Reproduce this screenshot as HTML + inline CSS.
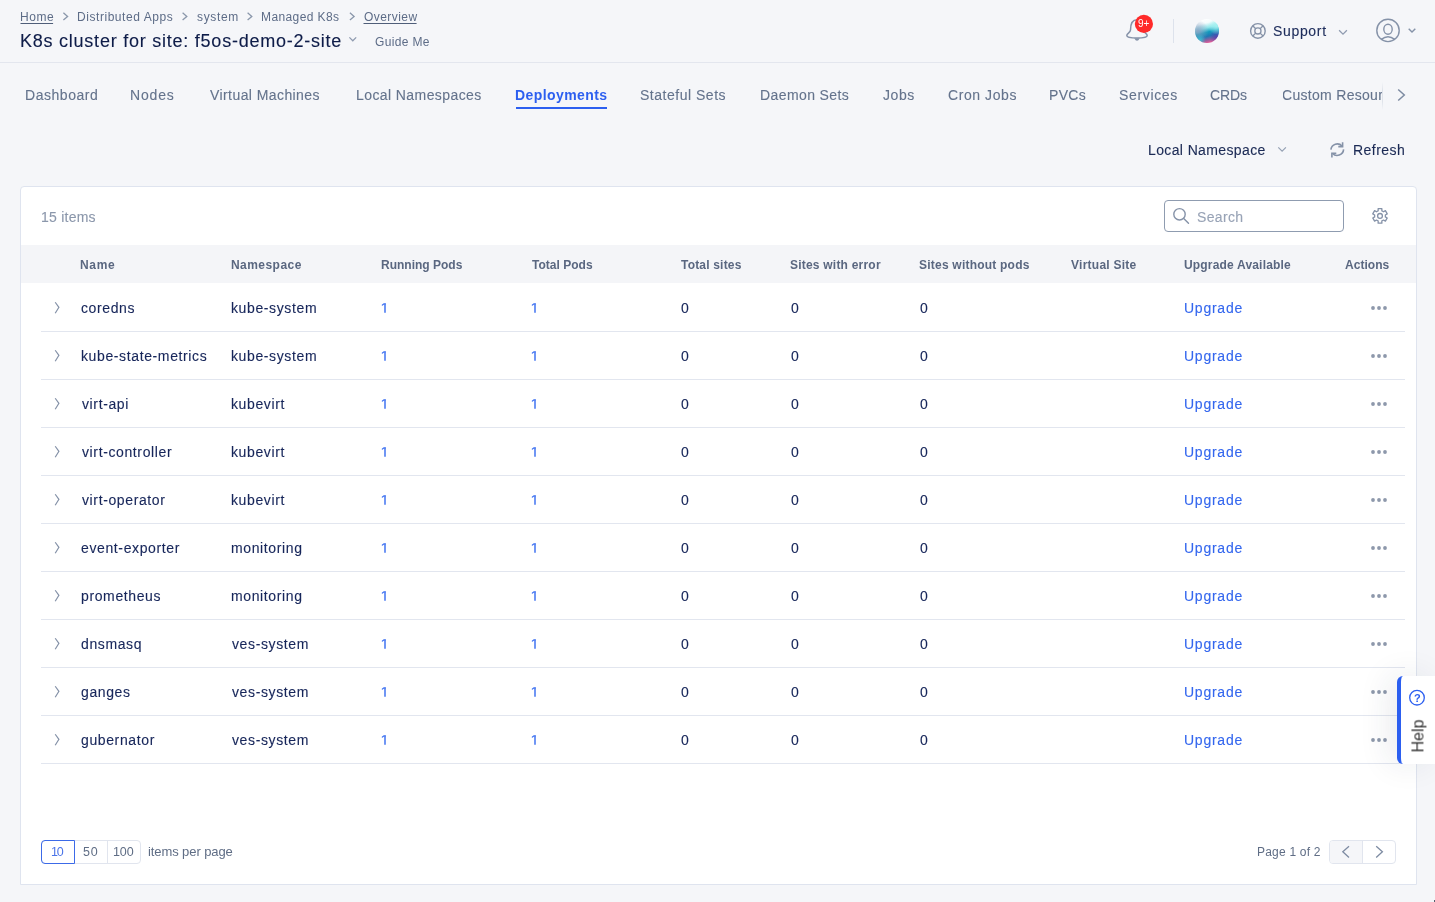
<!DOCTYPE html>
<html><head><meta charset="utf-8"><title>Deployments</title>
<style>
html,body{margin:0;padding:0;}
body{width:1435px;height:902px;overflow:hidden;background:#f5f6f9;position:relative;font-family:"Liberation Sans",sans-serif;}
.t{position:absolute;white-space:pre;will-change:transform;}
.a{position:absolute;}
svg{position:absolute;overflow:visible;}
</style></head><body>
<div class="a" style="left:0;top:62px;width:1435px;height:1px;background:#e3e6ee"></div>
<div class="a" style="left:20px;top:186px;width:1395px;height:697px;border:1px solid #dfe4ef;border-radius:4px 4px 0 0;background:#fff"></div>
<div class="a" style="left:1164px;top:200px;width:178px;height:30px;border:1px solid #8f9cb0;border-radius:4px;background:#fff"></div>
<div class="a" style="left:21px;top:245px;width:1395px;height:38px;background:#f4f5f8"></div>
<div class="a" style="left:41px;top:840px;width:98px;height:22px;border:1px solid #e1e5ee;border-radius:4px;background:#fff"></div>
<div class="a" style="left:107px;top:841px;width:1px;height:22px;background:#e1e5ee"></div>
<div class="a" style="left:41px;top:840px;width:32px;height:22px;border:1px solid #3c6ae8;border-radius:4px 0 0 4px"></div>
<div class="a" style="left:1329px;top:840px;width:65px;height:22px;border:1px solid #e1e5ee;border-radius:4px;background:#fff;overflow:hidden"><div style="position:absolute;left:0;top:0;width:32px;height:22px;background:#f5f6f9;border-right:1px solid #e1e5ee"></div></div>
<svg width="1435" height="902" style="left:0;top:0"><rect x="20.5" y="23" width="32.6" height="1" fill="#4f5e79"/><rect x="363.5" y="23" width="53.1" height="1" fill="#4f5e79"/><polyline points="63.4,12.8 67.6,16.4 63.4,20" fill="none" stroke="#8a97ab" stroke-width="1.3"/><polyline points="182.6,12.8 186.79999999999998,16.4 182.6,20" fill="none" stroke="#8a97ab" stroke-width="1.3"/><polyline points="247.6,12.8 251.79999999999998,16.4 247.6,20" fill="none" stroke="#8a97ab" stroke-width="1.3"/><polyline points="349.9,12.8 354.09999999999997,16.4 349.9,20" fill="none" stroke="#8a97ab" stroke-width="1.3"/><polyline points="349.4,37.4 352.8,40.8 356.2,37.4" fill="none" stroke="#8f9bb0" stroke-width="1.25"/><path d="M1130.5 30 C1130.5 23 1133 19.7 1137 19.7 C1141 19.7 1143.5 23 1143.5 30 C1143.5 32.5 1147.2 33.5 1147.2 35.5 C1147.2 37.2 1143 38 1137 38 C1131 38 1126.8 37.2 1126.8 35.5 C1126.8 33.5 1130.5 32.5 1130.5 30 Z" fill="none" stroke="#8592a8" stroke-width="1.5"/><path d="M1134.2 38.2 Q1137 43.2 1139.8 38.2 Z" fill="#8592a8"/><circle cx="1143.9" cy="23.9" r="9.1" fill="#ff2a2a"/><rect x="1173" y="19" width="1" height="24" fill="#dde2ec"/><defs>
<linearGradient id="sp2" x1="0.35" y1="0" x2="0.6" y2="1"><stop offset="0" stop-color="#ffffff"/><stop offset="0.18" stop-color="#f4fcfd"/><stop offset="0.38" stop-color="#8fe6ea"/><stop offset="0.55" stop-color="#139bbd"/><stop offset="0.72" stop-color="#1f78b4"/><stop offset="0.88" stop-color="#9a5f9e"/><stop offset="1" stop-color="#ef5f9a"/></linearGradient>
<radialGradient id="sp4" cx="0.12" cy="0.5" r="0.45"><stop offset="0" stop-color="#8a9dc0" stop-opacity="0.85"/><stop offset="1" stop-color="#8a9dc0" stop-opacity="0"/></radialGradient>
<radialGradient id="sp3" cx="0.2" cy="0.88" r="0.25"><stop offset="0" stop-color="#39c9d6" stop-opacity="0.9"/><stop offset="1" stop-color="#39c9d6" stop-opacity="0"/></radialGradient>
<radialGradient id="sp5" cx="0.9" cy="0.75" r="0.3"><stop offset="0" stop-color="#4a3fb0" stop-opacity="0.8"/><stop offset="1" stop-color="#4a3fb0" stop-opacity="0"/></radialGradient>
<radialGradient id="sp1" cx="0.9" cy="0.3" r="0.35"><stop offset="0" stop-color="#a6f3f2" stop-opacity="0.9"/><stop offset="1" stop-color="#a6f3f2" stop-opacity="0"/></radialGradient>
</defs><circle cx="1207" cy="31" r="12" fill="url(#sp2)"/><circle cx="1207" cy="31" r="12" fill="url(#sp4)"/><circle cx="1207" cy="31" r="12" fill="url(#sp3)"/><circle cx="1207" cy="31" r="12" fill="url(#sp5)"/><circle cx="1207" cy="31" r="12" fill="url(#sp1)"/><circle cx="1257.9" cy="30.9" r="7.3" fill="none" stroke="#8592a8" stroke-width="1.4"/><circle cx="1257.9" cy="30.9" r="3.1" fill="none" stroke="#8592a8" stroke-width="1.3"/><line x1="1260.09" y1="33.09" x2="1263.06" y2="36.06" stroke="#8592a8" stroke-width="1.3"/><line x1="1255.71" y1="33.09" x2="1252.74" y2="36.06" stroke="#8592a8" stroke-width="1.3"/><line x1="1255.71" y1="28.71" x2="1252.74" y2="25.74" stroke="#8592a8" stroke-width="1.3"/><line x1="1260.09" y1="28.71" x2="1263.06" y2="25.74" stroke="#8592a8" stroke-width="1.3"/><polyline points="1339.1,30.2 1343,34.1 1346.9,30.2" fill="none" stroke="#8f9bb0" stroke-width="1.25"/><circle cx="1388" cy="30.4" r="11.2" fill="none" stroke="#8592a8" stroke-width="1.4"/><ellipse cx="1388" cy="29.3" rx="4.2" ry="5" fill="none" stroke="#8592a8" stroke-width="1.4"/><path d="M1381.3 39.4 Q1388 34 1394.7 39.4" fill="none" stroke="#8592a8" stroke-width="1.4"/><polyline points="1408.7,28.7 1412,32 1415.3,28.7" fill="none" stroke="#8592a8" stroke-width="1.4"/><rect x="516" y="107" width="91" height="2" fill="#2c5ff0"/><polyline points="1398.2,89.5 1404.3,95 1398.2,100.5" fill="none" stroke="#7d8ba2" stroke-width="1.5"/><polyline points="1278.3,147.4 1282.1,151.2 1285.9,147.4" fill="none" stroke="#95a1b4" stroke-width="1.2"/><path d="M1330.9 149.6 A6.4 6.4 0 0 1 1342 146" fill="none" stroke="#8592a8" stroke-width="1.6"/><path d="M1342.6 142.2 V146.6 H1338.3" fill="none" stroke="#8592a8" stroke-width="1.6"/><path d="M1343.6 149.4 A6.4 6.4 0 0 1 1332.4 153.2" fill="none" stroke="#8592a8" stroke-width="1.6"/><path d="M1331.9 157.6 V153.2 H1336.3" fill="none" stroke="#8592a8" stroke-width="1.6"/><circle cx="1179.5" cy="214.3" r="5.7" fill="none" stroke="#8592a8" stroke-width="1.4"/><line x1="1183.7" y1="218.5" x2="1188.5" y2="223.3" stroke="#8592a8" stroke-width="1.4" stroke-linecap="round"/><path d="M1378.15 210.83 L1378.15 208.60 L1381.85 208.60 L1381.85 210.83 A5.4 5.4 0 0 1 1383.47 211.76 L1385.40 210.65 L1387.25 213.85 L1385.32 214.97 A5.4 5.4 0 0 1 1385.32 216.83 L1387.25 217.95 L1385.40 221.15 L1383.47 220.04 A5.4 5.4 0 0 1 1381.85 220.97 L1381.85 223.20 L1378.15 223.20 L1378.15 220.97 A5.4 5.4 0 0 1 1376.53 220.04 L1374.60 221.15 L1372.75 217.95 L1374.68 216.83 A5.4 5.4 0 0 1 1374.68 214.97 L1372.75 213.85 L1374.60 210.65 L1376.53 211.76 A5.4 5.4 0 0 1 1378.15 210.83 Z" fill="none" stroke="#8592a8" stroke-width="1.3" stroke-linejoin="round"/><circle cx="1380" cy="215.9" r="2.4" fill="none" stroke="#8592a8" stroke-width="1.3"/><polyline points="55.2,302.25 58.9,307.3 55.2,313.3" fill="none" stroke="#8592a8" stroke-width="1.2"/><circle cx="1373" cy="308" r="1.9" fill="#8d98ab"/><circle cx="1379" cy="308" r="1.9" fill="#8d98ab"/><circle cx="1385" cy="308" r="1.9" fill="#8d98ab"/><rect x="41" y="331" width="1364" height="1" fill="#e2e6ef"/><polyline points="55.2,350.25 58.9,355.3 55.2,361.3" fill="none" stroke="#8592a8" stroke-width="1.2"/><circle cx="1373" cy="356" r="1.9" fill="#8d98ab"/><circle cx="1379" cy="356" r="1.9" fill="#8d98ab"/><circle cx="1385" cy="356" r="1.9" fill="#8d98ab"/><rect x="41" y="379" width="1364" height="1" fill="#e2e6ef"/><polyline points="55.2,398.25 58.9,403.3 55.2,409.3" fill="none" stroke="#8592a8" stroke-width="1.2"/><circle cx="1373" cy="404" r="1.9" fill="#8d98ab"/><circle cx="1379" cy="404" r="1.9" fill="#8d98ab"/><circle cx="1385" cy="404" r="1.9" fill="#8d98ab"/><rect x="41" y="427" width="1364" height="1" fill="#e2e6ef"/><polyline points="55.2,446.25 58.9,451.3 55.2,457.3" fill="none" stroke="#8592a8" stroke-width="1.2"/><circle cx="1373" cy="452" r="1.9" fill="#8d98ab"/><circle cx="1379" cy="452" r="1.9" fill="#8d98ab"/><circle cx="1385" cy="452" r="1.9" fill="#8d98ab"/><rect x="41" y="475" width="1364" height="1" fill="#e2e6ef"/><polyline points="55.2,494.25 58.9,499.3 55.2,505.3" fill="none" stroke="#8592a8" stroke-width="1.2"/><circle cx="1373" cy="500" r="1.9" fill="#8d98ab"/><circle cx="1379" cy="500" r="1.9" fill="#8d98ab"/><circle cx="1385" cy="500" r="1.9" fill="#8d98ab"/><rect x="41" y="523" width="1364" height="1" fill="#e2e6ef"/><polyline points="55.2,542.25 58.9,547.3 55.2,553.3" fill="none" stroke="#8592a8" stroke-width="1.2"/><circle cx="1373" cy="548" r="1.9" fill="#8d98ab"/><circle cx="1379" cy="548" r="1.9" fill="#8d98ab"/><circle cx="1385" cy="548" r="1.9" fill="#8d98ab"/><rect x="41" y="571" width="1364" height="1" fill="#e2e6ef"/><polyline points="55.2,590.25 58.9,595.3 55.2,601.3" fill="none" stroke="#8592a8" stroke-width="1.2"/><circle cx="1373" cy="596" r="1.9" fill="#8d98ab"/><circle cx="1379" cy="596" r="1.9" fill="#8d98ab"/><circle cx="1385" cy="596" r="1.9" fill="#8d98ab"/><rect x="41" y="619" width="1364" height="1" fill="#e2e6ef"/><polyline points="55.2,638.25 58.9,643.3 55.2,649.3" fill="none" stroke="#8592a8" stroke-width="1.2"/><circle cx="1373" cy="644" r="1.9" fill="#8d98ab"/><circle cx="1379" cy="644" r="1.9" fill="#8d98ab"/><circle cx="1385" cy="644" r="1.9" fill="#8d98ab"/><rect x="41" y="667" width="1364" height="1" fill="#e2e6ef"/><polyline points="55.2,686.25 58.9,691.3 55.2,697.3" fill="none" stroke="#8592a8" stroke-width="1.2"/><circle cx="1373" cy="692" r="1.9" fill="#8d98ab"/><circle cx="1379" cy="692" r="1.9" fill="#8d98ab"/><circle cx="1385" cy="692" r="1.9" fill="#8d98ab"/><rect x="41" y="715" width="1364" height="1" fill="#e2e6ef"/><polyline points="55.2,734.25 58.9,739.3 55.2,745.3" fill="none" stroke="#8592a8" stroke-width="1.2"/><circle cx="1373" cy="740" r="1.9" fill="#8d98ab"/><circle cx="1379" cy="740" r="1.9" fill="#8d98ab"/><circle cx="1385" cy="740" r="1.9" fill="#8d98ab"/><rect x="41" y="763" width="1364" height="1" fill="#e2e6ef"/><polyline points="1349,846.2 1342.8,851.8 1349,857.4" fill="none" stroke="#7d8ba2" stroke-width="1.3"/><polyline points="1376.2,846.2 1382.4,851.8 1376.2,857.4" fill="none" stroke="#7d8ba2" stroke-width="1.3"/><path d="M385.0 303.7 V312.7" stroke="#4677f1" stroke-width="1.55"/><path d="M382.4 305.0 L384.1 303.8 H385.4" fill="none" stroke="#4677f1" stroke-width="1.35" stroke-linecap="round" stroke-linejoin="round"/><path d="M535.0 303.7 V312.7" stroke="#4677f1" stroke-width="1.55"/><path d="M532.4 305.0 L534.1 303.8 H535.4" fill="none" stroke="#4677f1" stroke-width="1.35" stroke-linecap="round" stroke-linejoin="round"/><path d="M385.0 351.7 V360.7" stroke="#4677f1" stroke-width="1.55"/><path d="M382.4 353.0 L384.1 351.8 H385.4" fill="none" stroke="#4677f1" stroke-width="1.35" stroke-linecap="round" stroke-linejoin="round"/><path d="M535.0 351.7 V360.7" stroke="#4677f1" stroke-width="1.55"/><path d="M532.4 353.0 L534.1 351.8 H535.4" fill="none" stroke="#4677f1" stroke-width="1.35" stroke-linecap="round" stroke-linejoin="round"/><path d="M385.0 399.7 V408.7" stroke="#4677f1" stroke-width="1.55"/><path d="M382.4 401.0 L384.1 399.8 H385.4" fill="none" stroke="#4677f1" stroke-width="1.35" stroke-linecap="round" stroke-linejoin="round"/><path d="M535.0 399.7 V408.7" stroke="#4677f1" stroke-width="1.55"/><path d="M532.4 401.0 L534.1 399.8 H535.4" fill="none" stroke="#4677f1" stroke-width="1.35" stroke-linecap="round" stroke-linejoin="round"/><path d="M385.0 447.7 V456.7" stroke="#4677f1" stroke-width="1.55"/><path d="M382.4 449.0 L384.1 447.8 H385.4" fill="none" stroke="#4677f1" stroke-width="1.35" stroke-linecap="round" stroke-linejoin="round"/><path d="M535.0 447.7 V456.7" stroke="#4677f1" stroke-width="1.55"/><path d="M532.4 449.0 L534.1 447.8 H535.4" fill="none" stroke="#4677f1" stroke-width="1.35" stroke-linecap="round" stroke-linejoin="round"/><path d="M385.0 495.7 V504.7" stroke="#4677f1" stroke-width="1.55"/><path d="M382.4 497.0 L384.1 495.8 H385.4" fill="none" stroke="#4677f1" stroke-width="1.35" stroke-linecap="round" stroke-linejoin="round"/><path d="M535.0 495.7 V504.7" stroke="#4677f1" stroke-width="1.55"/><path d="M532.4 497.0 L534.1 495.8 H535.4" fill="none" stroke="#4677f1" stroke-width="1.35" stroke-linecap="round" stroke-linejoin="round"/><path d="M385.0 543.7 V552.7" stroke="#4677f1" stroke-width="1.55"/><path d="M382.4 545.0 L384.1 543.8 H385.4" fill="none" stroke="#4677f1" stroke-width="1.35" stroke-linecap="round" stroke-linejoin="round"/><path d="M535.0 543.7 V552.7" stroke="#4677f1" stroke-width="1.55"/><path d="M532.4 545.0 L534.1 543.8 H535.4" fill="none" stroke="#4677f1" stroke-width="1.35" stroke-linecap="round" stroke-linejoin="round"/><path d="M385.0 591.7 V600.7" stroke="#4677f1" stroke-width="1.55"/><path d="M382.4 593.0 L384.1 591.8 H385.4" fill="none" stroke="#4677f1" stroke-width="1.35" stroke-linecap="round" stroke-linejoin="round"/><path d="M535.0 591.7 V600.7" stroke="#4677f1" stroke-width="1.55"/><path d="M532.4 593.0 L534.1 591.8 H535.4" fill="none" stroke="#4677f1" stroke-width="1.35" stroke-linecap="round" stroke-linejoin="round"/><path d="M385.0 639.7 V648.7" stroke="#4677f1" stroke-width="1.55"/><path d="M382.4 641.0 L384.1 639.8 H385.4" fill="none" stroke="#4677f1" stroke-width="1.35" stroke-linecap="round" stroke-linejoin="round"/><path d="M535.0 639.7 V648.7" stroke="#4677f1" stroke-width="1.55"/><path d="M532.4 641.0 L534.1 639.8 H535.4" fill="none" stroke="#4677f1" stroke-width="1.35" stroke-linecap="round" stroke-linejoin="round"/><path d="M385.0 687.7 V696.7" stroke="#4677f1" stroke-width="1.55"/><path d="M382.4 689.0 L384.1 687.8 H385.4" fill="none" stroke="#4677f1" stroke-width="1.35" stroke-linecap="round" stroke-linejoin="round"/><path d="M535.0 687.7 V696.7" stroke="#4677f1" stroke-width="1.55"/><path d="M532.4 689.0 L534.1 687.8 H535.4" fill="none" stroke="#4677f1" stroke-width="1.35" stroke-linecap="round" stroke-linejoin="round"/><path d="M385.0 735.7 V744.7" stroke="#4677f1" stroke-width="1.55"/><path d="M382.4 737.0 L384.1 735.8 H385.4" fill="none" stroke="#4677f1" stroke-width="1.35" stroke-linecap="round" stroke-linejoin="round"/><path d="M535.0 735.7 V744.7" stroke="#4677f1" stroke-width="1.55"/><path d="M532.4 737.0 L534.1 735.8 H535.4" fill="none" stroke="#4677f1" stroke-width="1.35" stroke-linecap="round" stroke-linejoin="round"/></svg>
<span class="t" style="left:1138px;top:18.5px;font-size:10px;line-height:10px;color:#fff">9+</span>
<div class="a" style="left:1283px;top:80px;width:99px;height:30px;overflow:hidden"><span class="t" style="left:-1px;top:8.45px;font-size:14px;line-height:14px;color:#64738c;letter-spacing:0.3px;-webkit-text-stroke:0.12px currentColor">Custom Resources</span></div>
<div class="a" style="left:1382px;top:82px;width:1px;height:28px;background:linear-gradient(#f5f6f9,#dfe3ea 30%,#dfe3ea 70%,#f5f6f9)"></div>
<div class="a" style="left:1397px;top:676px;width:38px;height:88px;background:#fff;border-radius:6px 0 0 6px;box-shadow:-8px 0 32px rgba(30,40,70,0.09);border-left:4px solid #2c5ff0;box-sizing:border-box;z-index:5"></div>
<svg width="1435" height="902" style="left:0;top:0;z-index:6"><circle cx="1417" cy="697.7" r="7.3" fill="none" stroke="#2c5ff0" stroke-width="1.3"/></svg>
<span class="t" style="left:1413.5px;top:692.5px;font-size:11px;line-height:11px;font-weight:700;color:#2c5ff0;z-index:6">?</span>
<span class="t" style="left:1401.5px;top:728px;font-size:16px;line-height:16px;color:#333;transform:rotate(-90deg);transform-origin:center;z-index:6">Help</span>
<div class="a" style="left:1434px;top:900px;width:1px;height:2px;background:#56606f"></div>
<span class="t" style="left:19.50px;top:10.74px;font-size:12px;line-height:12px;font-weight:400;color:#5d6c87;letter-spacing:0.533px;">Home</span>
<span class="t" style="left:76.70px;top:10.74px;font-size:12px;line-height:12px;font-weight:400;color:#5d6c87;letter-spacing:0.553px;">Distributed Apps</span>
<span class="t" style="left:196.90px;top:10.74px;font-size:12px;line-height:12px;font-weight:400;color:#5d6c87;letter-spacing:0.640px;">system</span>
<span class="t" style="left:261.10px;top:10.74px;font-size:12px;line-height:12px;font-weight:400;color:#5d6c87;letter-spacing:0.390px;">Managed K8s</span>
<span class="t" style="left:363.50px;top:10.74px;font-size:12px;line-height:12px;font-weight:400;color:#5d6c87;letter-spacing:0.443px;">Overview</span>
<span class="t" style="left:19.50px;top:31.56px;font-size:18px;line-height:18px;font-weight:400;color:#0e1c48;letter-spacing:0.762px;-webkit-text-stroke:0.12px currentColor;">K8s cluster for site: f5os-demo-2-site</span>
<span class="t" style="left:375.00px;top:35.54px;font-size:12px;line-height:12px;font-weight:400;color:#5d6c87;letter-spacing:0.357px;">Guide Me</span>
<span class="t" style="left:1273.30px;top:24.05px;font-size:14px;line-height:14px;font-weight:400;color:#1c2b5a;letter-spacing:0.667px;-webkit-text-stroke:0.12px currentColor;">Support</span>
<span class="t" style="left:24.50px;top:88.45px;font-size:14px;line-height:14px;font-weight:400;color:#64738c;letter-spacing:0.537px;-webkit-text-stroke:0.12px currentColor;">Dashboard</span>
<span class="t" style="left:130.40px;top:88.45px;font-size:14px;line-height:14px;font-weight:400;color:#64738c;letter-spacing:0.850px;-webkit-text-stroke:0.12px currentColor;">Nodes</span>
<span class="t" style="left:210.10px;top:88.45px;font-size:14px;line-height:14px;font-weight:400;color:#64738c;letter-spacing:0.420px;-webkit-text-stroke:0.12px currentColor;">Virtual Machines</span>
<span class="t" style="left:356.30px;top:88.45px;font-size:14px;line-height:14px;font-weight:400;color:#64738c;letter-spacing:0.413px;-webkit-text-stroke:0.12px currentColor;">Local Namespaces</span>
<span class="t" style="left:515.30px;top:88.45px;font-size:14px;line-height:14px;font-weight:700;color:#2c5ff0;letter-spacing:0.410px;">Deployments</span>
<span class="t" style="left:639.60px;top:88.45px;font-size:14px;line-height:14px;font-weight:400;color:#64738c;letter-spacing:0.517px;-webkit-text-stroke:0.12px currentColor;">Stateful Sets</span>
<span class="t" style="left:760.00px;top:88.45px;font-size:14px;line-height:14px;font-weight:400;color:#64738c;letter-spacing:0.400px;-webkit-text-stroke:0.12px currentColor;">Daemon Sets</span>
<span class="t" style="left:883.10px;top:88.45px;font-size:14px;line-height:14px;font-weight:400;color:#64738c;letter-spacing:0.567px;-webkit-text-stroke:0.12px currentColor;">Jobs</span>
<span class="t" style="left:947.60px;top:88.45px;font-size:14px;line-height:14px;font-weight:400;color:#64738c;letter-spacing:0.575px;-webkit-text-stroke:0.12px currentColor;">Cron Jobs</span>
<span class="t" style="left:1049.30px;top:88.45px;font-size:14px;line-height:14px;font-weight:400;color:#64738c;letter-spacing:0.300px;-webkit-text-stroke:0.12px currentColor;">PVCs</span>
<span class="t" style="left:1119.00px;top:88.45px;font-size:14px;line-height:14px;font-weight:400;color:#64738c;letter-spacing:0.657px;-webkit-text-stroke:0.12px currentColor;">Services</span>
<span class="t" style="left:1210.20px;top:88.45px;font-size:14px;line-height:14px;font-weight:400;color:#64738c;letter-spacing:-0.133px;-webkit-text-stroke:0.12px currentColor;">CRDs</span>
<span class="t" style="left:1148.00px;top:143.15px;font-size:14px;line-height:14px;font-weight:400;color:#1b2a55;letter-spacing:0.379px;-webkit-text-stroke:0.12px currentColor;">Local Namespace</span>
<span class="t" style="left:1352.50px;top:143.15px;font-size:14px;line-height:14px;font-weight:400;color:#1b2a55;letter-spacing:0.467px;-webkit-text-stroke:0.12px currentColor;">Refresh</span>
<span class="t" style="left:40.60px;top:210.35px;font-size:14px;line-height:14px;font-weight:400;color:#8b97ab;letter-spacing:0.243px;-webkit-text-stroke:0.12px currentColor;">15 items</span>
<span class="t" style="left:1196.50px;top:209.95px;font-size:14px;line-height:14px;font-weight:400;color:#98a3b6;letter-spacing:0.340px;-webkit-text-stroke:0.12px currentColor;">Search</span>
<span class="t" style="left:80.40px;top:259.14px;font-size:12px;line-height:12px;font-weight:700;color:#5a6780;letter-spacing:0.700px;">Name</span>
<span class="t" style="left:230.70px;top:259.14px;font-size:12px;line-height:12px;font-weight:700;color:#5a6780;letter-spacing:0.450px;">Namespace</span>
<span class="t" style="left:380.50px;top:259.14px;font-size:12px;line-height:12px;font-weight:700;color:#5a6780;letter-spacing:0.000px;">Running Pods</span>
<span class="t" style="left:531.70px;top:259.14px;font-size:12px;line-height:12px;font-weight:700;color:#5a6780;letter-spacing:0.022px;">Total Pods</span>
<span class="t" style="left:681.20px;top:259.14px;font-size:12px;line-height:12px;font-weight:700;color:#5a6780;letter-spacing:0.190px;">Total sites</span>
<span class="t" style="left:790.30px;top:259.14px;font-size:12px;line-height:12px;font-weight:700;color:#5a6780;letter-spacing:0.213px;">Sites with error</span>
<span class="t" style="left:918.50px;top:259.14px;font-size:12px;line-height:12px;font-weight:700;color:#5a6780;letter-spacing:0.218px;">Sites without pods</span>
<span class="t" style="left:1070.50px;top:259.14px;font-size:12px;line-height:12px;font-weight:700;color:#5a6780;letter-spacing:0.255px;">Virtual Site</span>
<span class="t" style="left:1184.40px;top:259.14px;font-size:12px;line-height:12px;font-weight:700;color:#5a6780;letter-spacing:0.181px;">Upgrade Available</span>
<span class="t" style="left:1345.20px;top:259.14px;font-size:12px;line-height:12px;font-weight:700;color:#5a6780;letter-spacing:0.033px;">Actions</span>
<span class="t" style="left:80.50px;top:300.95px;font-size:14px;line-height:14px;font-weight:400;color:#17265a;letter-spacing:0.620px;-webkit-text-stroke:0.12px currentColor;">coredns</span>
<span class="t" style="left:230.70px;top:300.95px;font-size:14px;line-height:14px;font-weight:400;color:#17265a;letter-spacing:0.620px;-webkit-text-stroke:0.12px currentColor;">kube-system</span>
<span class="t" style="left:681.20px;top:300.95px;font-size:14px;line-height:14px;font-weight:400;color:#17265a;letter-spacing:0.000px;-webkit-text-stroke:0.12px currentColor;">0</span>
<span class="t" style="left:791.30px;top:300.95px;font-size:14px;line-height:14px;font-weight:400;color:#17265a;letter-spacing:0.000px;-webkit-text-stroke:0.12px currentColor;">0</span>
<span class="t" style="left:919.50px;top:300.95px;font-size:14px;line-height:14px;font-weight:400;color:#17265a;letter-spacing:0.000px;-webkit-text-stroke:0.12px currentColor;">0</span>
<span class="t" style="left:1184.40px;top:300.95px;font-size:14px;line-height:14px;font-weight:400;color:#3467ee;letter-spacing:0.750px;-webkit-text-stroke:0.12px currentColor;">Upgrade</span>
<span class="t" style="left:80.50px;top:348.95px;font-size:14px;line-height:14px;font-weight:400;color:#17265a;letter-spacing:0.620px;-webkit-text-stroke:0.12px currentColor;">kube-state-metrics</span>
<span class="t" style="left:230.70px;top:348.95px;font-size:14px;line-height:14px;font-weight:400;color:#17265a;letter-spacing:0.620px;-webkit-text-stroke:0.12px currentColor;">kube-system</span>
<span class="t" style="left:681.20px;top:348.95px;font-size:14px;line-height:14px;font-weight:400;color:#17265a;letter-spacing:0.000px;-webkit-text-stroke:0.12px currentColor;">0</span>
<span class="t" style="left:791.30px;top:348.95px;font-size:14px;line-height:14px;font-weight:400;color:#17265a;letter-spacing:0.000px;-webkit-text-stroke:0.12px currentColor;">0</span>
<span class="t" style="left:919.50px;top:348.95px;font-size:14px;line-height:14px;font-weight:400;color:#17265a;letter-spacing:0.000px;-webkit-text-stroke:0.12px currentColor;">0</span>
<span class="t" style="left:1184.40px;top:348.95px;font-size:14px;line-height:14px;font-weight:400;color:#3467ee;letter-spacing:0.750px;-webkit-text-stroke:0.12px currentColor;">Upgrade</span>
<span class="t" style="left:81.50px;top:396.95px;font-size:14px;line-height:14px;font-weight:400;color:#17265a;letter-spacing:0.620px;-webkit-text-stroke:0.12px currentColor;">virt-api</span>
<span class="t" style="left:230.70px;top:396.95px;font-size:14px;line-height:14px;font-weight:400;color:#17265a;letter-spacing:0.620px;-webkit-text-stroke:0.12px currentColor;">kubevirt</span>
<span class="t" style="left:681.20px;top:396.95px;font-size:14px;line-height:14px;font-weight:400;color:#17265a;letter-spacing:0.000px;-webkit-text-stroke:0.12px currentColor;">0</span>
<span class="t" style="left:791.30px;top:396.95px;font-size:14px;line-height:14px;font-weight:400;color:#17265a;letter-spacing:0.000px;-webkit-text-stroke:0.12px currentColor;">0</span>
<span class="t" style="left:919.50px;top:396.95px;font-size:14px;line-height:14px;font-weight:400;color:#17265a;letter-spacing:0.000px;-webkit-text-stroke:0.12px currentColor;">0</span>
<span class="t" style="left:1184.40px;top:396.95px;font-size:14px;line-height:14px;font-weight:400;color:#3467ee;letter-spacing:0.750px;-webkit-text-stroke:0.12px currentColor;">Upgrade</span>
<span class="t" style="left:81.50px;top:444.95px;font-size:14px;line-height:14px;font-weight:400;color:#17265a;letter-spacing:0.620px;-webkit-text-stroke:0.12px currentColor;">virt-controller</span>
<span class="t" style="left:230.70px;top:444.95px;font-size:14px;line-height:14px;font-weight:400;color:#17265a;letter-spacing:0.620px;-webkit-text-stroke:0.12px currentColor;">kubevirt</span>
<span class="t" style="left:681.20px;top:444.95px;font-size:14px;line-height:14px;font-weight:400;color:#17265a;letter-spacing:0.000px;-webkit-text-stroke:0.12px currentColor;">0</span>
<span class="t" style="left:791.30px;top:444.95px;font-size:14px;line-height:14px;font-weight:400;color:#17265a;letter-spacing:0.000px;-webkit-text-stroke:0.12px currentColor;">0</span>
<span class="t" style="left:919.50px;top:444.95px;font-size:14px;line-height:14px;font-weight:400;color:#17265a;letter-spacing:0.000px;-webkit-text-stroke:0.12px currentColor;">0</span>
<span class="t" style="left:1184.40px;top:444.95px;font-size:14px;line-height:14px;font-weight:400;color:#3467ee;letter-spacing:0.750px;-webkit-text-stroke:0.12px currentColor;">Upgrade</span>
<span class="t" style="left:81.50px;top:492.95px;font-size:14px;line-height:14px;font-weight:400;color:#17265a;letter-spacing:0.620px;-webkit-text-stroke:0.12px currentColor;">virt-operator</span>
<span class="t" style="left:230.70px;top:492.95px;font-size:14px;line-height:14px;font-weight:400;color:#17265a;letter-spacing:0.620px;-webkit-text-stroke:0.12px currentColor;">kubevirt</span>
<span class="t" style="left:681.20px;top:492.95px;font-size:14px;line-height:14px;font-weight:400;color:#17265a;letter-spacing:0.000px;-webkit-text-stroke:0.12px currentColor;">0</span>
<span class="t" style="left:791.30px;top:492.95px;font-size:14px;line-height:14px;font-weight:400;color:#17265a;letter-spacing:0.000px;-webkit-text-stroke:0.12px currentColor;">0</span>
<span class="t" style="left:919.50px;top:492.95px;font-size:14px;line-height:14px;font-weight:400;color:#17265a;letter-spacing:0.000px;-webkit-text-stroke:0.12px currentColor;">0</span>
<span class="t" style="left:1184.40px;top:492.95px;font-size:14px;line-height:14px;font-weight:400;color:#3467ee;letter-spacing:0.750px;-webkit-text-stroke:0.12px currentColor;">Upgrade</span>
<span class="t" style="left:80.50px;top:540.95px;font-size:14px;line-height:14px;font-weight:400;color:#17265a;letter-spacing:0.620px;-webkit-text-stroke:0.12px currentColor;">event-exporter</span>
<span class="t" style="left:230.70px;top:540.95px;font-size:14px;line-height:14px;font-weight:400;color:#17265a;letter-spacing:0.620px;-webkit-text-stroke:0.12px currentColor;">monitoring</span>
<span class="t" style="left:681.20px;top:540.95px;font-size:14px;line-height:14px;font-weight:400;color:#17265a;letter-spacing:0.000px;-webkit-text-stroke:0.12px currentColor;">0</span>
<span class="t" style="left:791.30px;top:540.95px;font-size:14px;line-height:14px;font-weight:400;color:#17265a;letter-spacing:0.000px;-webkit-text-stroke:0.12px currentColor;">0</span>
<span class="t" style="left:919.50px;top:540.95px;font-size:14px;line-height:14px;font-weight:400;color:#17265a;letter-spacing:0.000px;-webkit-text-stroke:0.12px currentColor;">0</span>
<span class="t" style="left:1184.40px;top:540.95px;font-size:14px;line-height:14px;font-weight:400;color:#3467ee;letter-spacing:0.750px;-webkit-text-stroke:0.12px currentColor;">Upgrade</span>
<span class="t" style="left:80.50px;top:588.95px;font-size:14px;line-height:14px;font-weight:400;color:#17265a;letter-spacing:0.620px;-webkit-text-stroke:0.12px currentColor;">prometheus</span>
<span class="t" style="left:230.70px;top:588.95px;font-size:14px;line-height:14px;font-weight:400;color:#17265a;letter-spacing:0.620px;-webkit-text-stroke:0.12px currentColor;">monitoring</span>
<span class="t" style="left:681.20px;top:588.95px;font-size:14px;line-height:14px;font-weight:400;color:#17265a;letter-spacing:0.000px;-webkit-text-stroke:0.12px currentColor;">0</span>
<span class="t" style="left:791.30px;top:588.95px;font-size:14px;line-height:14px;font-weight:400;color:#17265a;letter-spacing:0.000px;-webkit-text-stroke:0.12px currentColor;">0</span>
<span class="t" style="left:919.50px;top:588.95px;font-size:14px;line-height:14px;font-weight:400;color:#17265a;letter-spacing:0.000px;-webkit-text-stroke:0.12px currentColor;">0</span>
<span class="t" style="left:1184.40px;top:588.95px;font-size:14px;line-height:14px;font-weight:400;color:#3467ee;letter-spacing:0.750px;-webkit-text-stroke:0.12px currentColor;">Upgrade</span>
<span class="t" style="left:80.50px;top:636.95px;font-size:14px;line-height:14px;font-weight:400;color:#17265a;letter-spacing:0.620px;-webkit-text-stroke:0.12px currentColor;">dnsmasq</span>
<span class="t" style="left:231.70px;top:636.95px;font-size:14px;line-height:14px;font-weight:400;color:#17265a;letter-spacing:0.620px;-webkit-text-stroke:0.12px currentColor;">ves-system</span>
<span class="t" style="left:681.20px;top:636.95px;font-size:14px;line-height:14px;font-weight:400;color:#17265a;letter-spacing:0.000px;-webkit-text-stroke:0.12px currentColor;">0</span>
<span class="t" style="left:791.30px;top:636.95px;font-size:14px;line-height:14px;font-weight:400;color:#17265a;letter-spacing:0.000px;-webkit-text-stroke:0.12px currentColor;">0</span>
<span class="t" style="left:919.50px;top:636.95px;font-size:14px;line-height:14px;font-weight:400;color:#17265a;letter-spacing:0.000px;-webkit-text-stroke:0.12px currentColor;">0</span>
<span class="t" style="left:1184.40px;top:636.95px;font-size:14px;line-height:14px;font-weight:400;color:#3467ee;letter-spacing:0.750px;-webkit-text-stroke:0.12px currentColor;">Upgrade</span>
<span class="t" style="left:80.50px;top:684.95px;font-size:14px;line-height:14px;font-weight:400;color:#17265a;letter-spacing:0.620px;-webkit-text-stroke:0.12px currentColor;">ganges</span>
<span class="t" style="left:231.70px;top:684.95px;font-size:14px;line-height:14px;font-weight:400;color:#17265a;letter-spacing:0.620px;-webkit-text-stroke:0.12px currentColor;">ves-system</span>
<span class="t" style="left:681.20px;top:684.95px;font-size:14px;line-height:14px;font-weight:400;color:#17265a;letter-spacing:0.000px;-webkit-text-stroke:0.12px currentColor;">0</span>
<span class="t" style="left:791.30px;top:684.95px;font-size:14px;line-height:14px;font-weight:400;color:#17265a;letter-spacing:0.000px;-webkit-text-stroke:0.12px currentColor;">0</span>
<span class="t" style="left:919.50px;top:684.95px;font-size:14px;line-height:14px;font-weight:400;color:#17265a;letter-spacing:0.000px;-webkit-text-stroke:0.12px currentColor;">0</span>
<span class="t" style="left:1184.40px;top:684.95px;font-size:14px;line-height:14px;font-weight:400;color:#3467ee;letter-spacing:0.750px;-webkit-text-stroke:0.12px currentColor;">Upgrade</span>
<span class="t" style="left:80.50px;top:732.95px;font-size:14px;line-height:14px;font-weight:400;color:#17265a;letter-spacing:0.620px;-webkit-text-stroke:0.12px currentColor;">gubernator</span>
<span class="t" style="left:231.70px;top:732.95px;font-size:14px;line-height:14px;font-weight:400;color:#17265a;letter-spacing:0.620px;-webkit-text-stroke:0.12px currentColor;">ves-system</span>
<span class="t" style="left:681.20px;top:732.95px;font-size:14px;line-height:14px;font-weight:400;color:#17265a;letter-spacing:0.000px;-webkit-text-stroke:0.12px currentColor;">0</span>
<span class="t" style="left:791.30px;top:732.95px;font-size:14px;line-height:14px;font-weight:400;color:#17265a;letter-spacing:0.000px;-webkit-text-stroke:0.12px currentColor;">0</span>
<span class="t" style="left:919.50px;top:732.95px;font-size:14px;line-height:14px;font-weight:400;color:#17265a;letter-spacing:0.000px;-webkit-text-stroke:0.12px currentColor;">0</span>
<span class="t" style="left:1184.40px;top:732.95px;font-size:14px;line-height:14px;font-weight:400;color:#3467ee;letter-spacing:0.750px;-webkit-text-stroke:0.12px currentColor;">Upgrade</span>
<span class="t" style="left:51.20px;top:846.02px;font-size:12.5px;line-height:12.5px;font-weight:400;color:#4b74e8;letter-spacing:-1.200px;">10</span>
<span class="t" style="left:83.00px;top:846.02px;font-size:12.5px;line-height:12.5px;font-weight:400;color:#5f6d85;letter-spacing:0.800px;">50</span>
<span class="t" style="left:113.00px;top:846.02px;font-size:12.5px;line-height:12.5px;font-weight:400;color:#5f6d85;letter-spacing:-0.100px;">100</span>
<span class="t" style="left:148.30px;top:844.70px;font-size:13px;line-height:13px;font-weight:400;color:#5f6d85;letter-spacing:-0.092px;">items per page</span>
<span class="t" style="left:1257.20px;top:845.84px;font-size:12px;line-height:12px;font-weight:400;color:#5f6d85;letter-spacing:0.210px;">Page 1 of 2</span>
</body></html>
